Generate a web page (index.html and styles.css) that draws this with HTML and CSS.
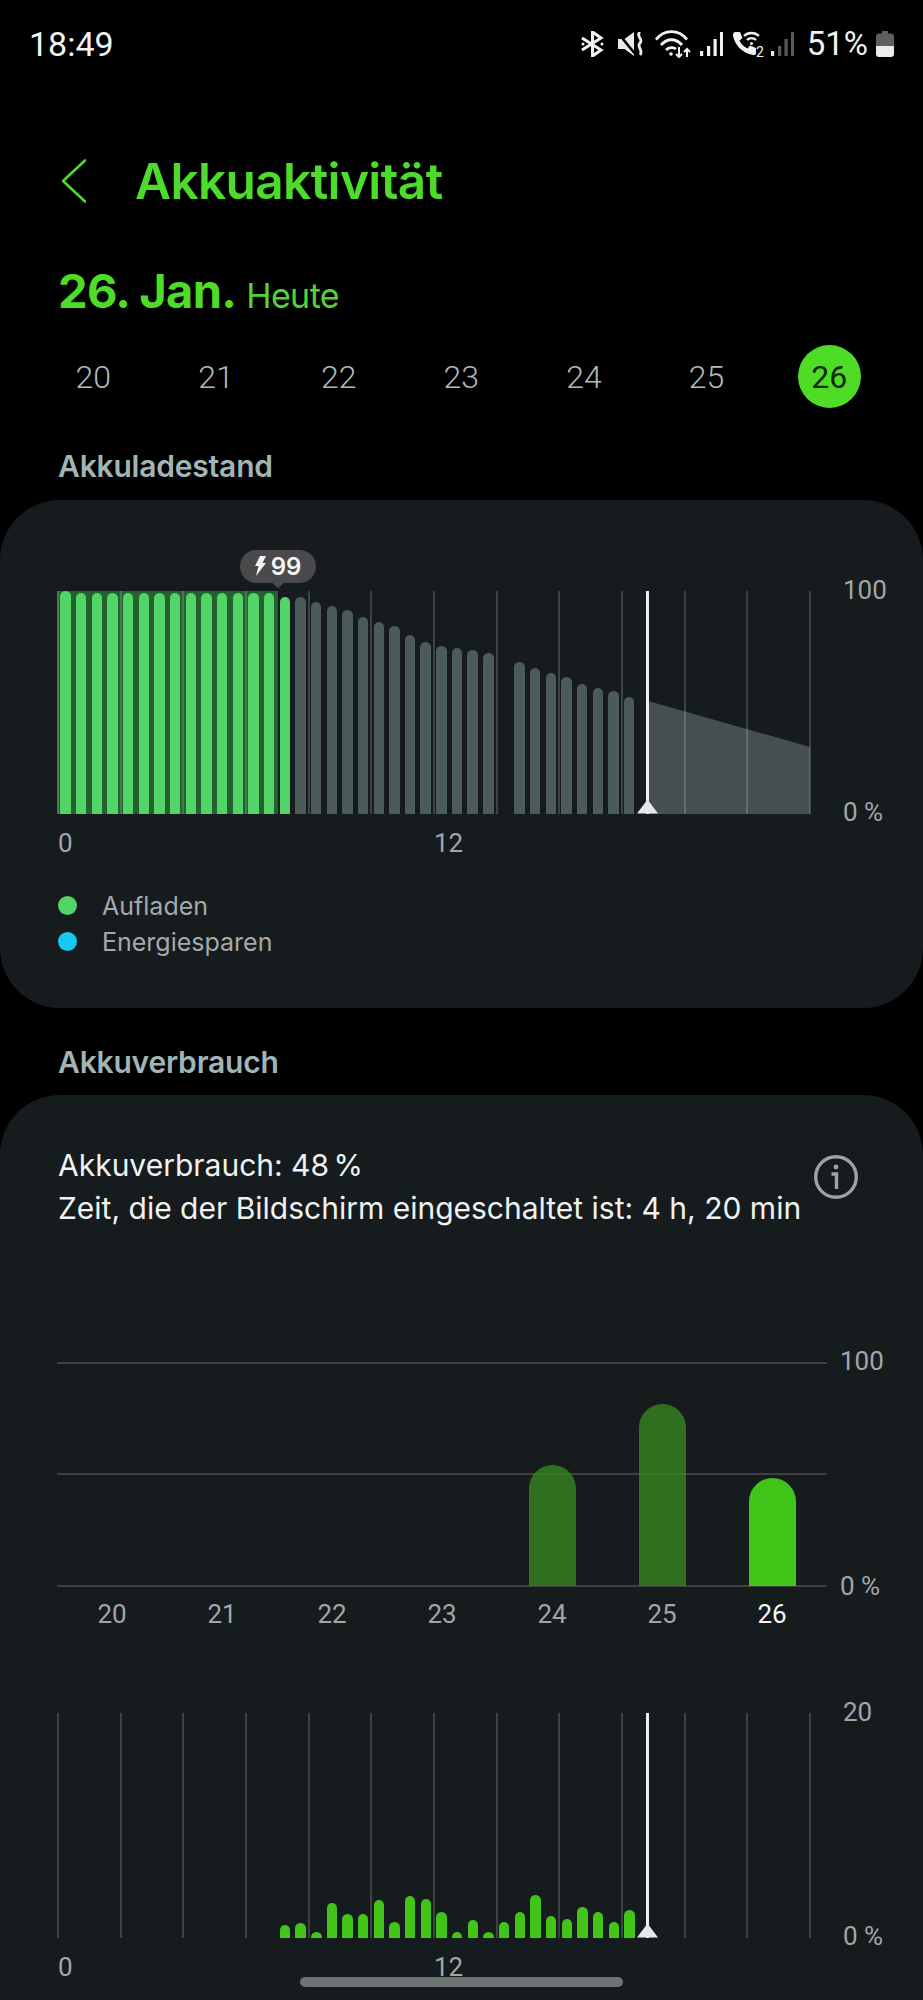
FILE: index.html
```html
<!DOCTYPE html>
<html lang="de">
<head>
<meta charset="utf-8">
<title>Akkuaktivität</title>
<link rel="stylesheet" href="styles.css">
</head>
<body>
<div class="page">
  <div class="status">
    <span class="clock">18:49</span>
    <div class="status-icons">
      <svg class="ic-bt" width="23" height="26" viewBox="0 0 23 26" fill="none" stroke="#f2f2f2" stroke-width="3"><path d="M1 7 20 19 11.500 25V1L20 7 1 19"/><circle cx="2" cy="13" r="1.500" fill="#f2f2f2" stroke="none"/><circle cx="21" cy="13" r="1.500" fill="#f2f2f2" stroke="none"/></svg>
      <svg class="ic-mute" width="26" height="24" viewBox="0 0 26 24" fill="none"><path d="M0 7H6.500L16 0V24L6.500 17H0z" fill="#ececec"/><path d="M0 1 18 23" stroke="#000" stroke-width="2.600"/><path d="M22 0c-5 4 4 7 0 11-4 4 4 7 0 12" stroke="#ececec" stroke-width="2.800"/></svg>
      <svg class="ic-wifi" width="37" height="28" viewBox="0 0 37 28" fill="none" stroke="#f2f2f2" stroke-width="2.800"><path d="M1 9.500C9.500 -1 23.500 -1 32 9.500"/><path d="M6 15C12 8 21 8 27 15"/><path d="M11 20C14 17 18.500 17 21 19"/><circle cx="16" cy="24" r="1.800" fill="#f2f2f2" stroke="none"/><path stroke-width="2" d="M24 17V27M21 24l3 3 3-3M32 27V19M29 22l3-3 3 3"/></svg>
      <svg class="ic-sig" width="23" height="24" viewBox="0 0 23 24" fill="#f2f2f2"><rect x="0" y="19" width="3.200" height="5"/><rect x="7" y="14" width="3.200" height="10"/><rect x="13.500" y="7" width="3.200" height="17"/><rect x="20" y="0" width="3" height="24"/></svg>
      <svg class="ic-call" width="34" height="30" viewBox="0 0 34 30" fill="none"><path d="M3 1 8 1 10.500 7 7.500 9.500C9 13 12 16 15.500 17.500L18 14.500 24 17V22C24 23.500 22.500 24.500 21 24 10 22 3 14 1 5 .8 3 1.500 1.500 3 1Z" fill="#f2f2f2"/><path d="M12 5C16 1 23 1 27 5M15 9C17.500 6.500 21.500 6.500 24 9" stroke="#f2f2f2" stroke-width="2.400"/><circle cx="19.500" cy="12.500" r="1.500" fill="#f2f2f2"/><text class="ic-call-2" x="24" y="26">2</text></svg>
      <svg class="ic-sig2" width="23" height="24" viewBox="0 0 23 24" fill="#5a5a5a"><rect x="0" y="19" width="3.200" height="5" fill="#e8e8e8"/><rect x="7" y="14" width="3.200" height="10"/><rect x="13.500" y="7" width="3.200" height="17"/><rect x="20" y="0" width="3" height="24"/></svg>
      <span class="pct">51%</span>
      <svg class="ic-bat" width="18" height="26" viewBox="0 0 18 26"><path d="M6 0H12V2.500H15C16.800 2.500 18 3.700 18 5.500V15H0V5.500C0 3.700 1.200 2.500 3 2.500H6z" fill="#5f5f5f"/><path d="M0 15H18V23C18 24.800 16.800 26 15 26H3C1.200 26 0 24.800 0 23z" fill="#ececec"/></svg>
    </div>
  </div>

  <header class="appbar">
    <svg class="back" width="24" height="44" viewBox="0 0 24 44" fill="none" stroke="#4ddb2b" stroke-width="2.600" stroke-linecap="round" stroke-linejoin="round"><path d="M23 1.500 1 22 23 42.500"/></svg>
    <h1 class="title">Akkuaktivität</h1>
  </header>

  <div class="date"><span class="date-main">26. Jan.</span><span class="date-sub">Heute</span></div>

  <div class="days">
    <span class="day">20</span><span class="day">21</span><span class="day">22</span><span class="day">23</span><span class="day">24</span><span class="day">25</span><span class="day day-on"><b>26</b></span>
  </div>

  <h2 class="section first">Akkuladestand</h2>
  <section class="card card-level">
    <div class="chart">
      <div class="plot">
        <svg class="forecast" viewBox="0 0 754 223" width="754" height="223"><path d="M591 110 753 156V223H591z" fill="#44504f"/></svg>
        <div class="band"></div>
        <div class="vgrid"><i></i><i></i><i></i><i></i><i></i><i></i><i></i><i></i><i></i><i></i><i></i><i></i><i></i></div>
        <div class="bars">
          <i class="g" style="height:223px"></i><i class="g" style="height:221px"></i><i class="g" style="height:221px"></i><i class="g" style="height:221px"></i><i class="g" style="height:221px"></i><i class="g" style="height:221px"></i><i class="g" style="height:221px"></i><i class="g" style="height:221px"></i><i class="g" style="height:221px"></i><i class="g" style="height:221px"></i><i class="g" style="height:221px"></i><i class="g" style="height:221px"></i><i class="g" style="height:221px"></i><i class="g" style="height:221px"></i><i class="g" style="height:216.700px"></i>
          <i class="s" style="height:216.700px"></i><i class="s" style="height:212px"></i><i class="s" style="height:207.700px"></i><i class="s" style="height:203.300px"></i><i class="s" style="height:196.700px"></i><i class="s" style="height:192px"></i><i class="s" style="height:187.700px"></i><i class="s" style="height:178.700px"></i><i class="s" style="height:172px"></i><i class="s" style="height:167.700px"></i><i class="s" style="height:165.300px"></i><i class="s" style="height:163.300px"></i><i class="s" style="height:161px"></i><i class="s" style="height:0"></i><i class="s" style="height:152px"></i><i class="s" style="height:145.300px"></i><i class="s" style="height:141px"></i><i class="s" style="height:136.300px"></i><i class="s" style="height:129.700px"></i><i class="s" style="height:125.300px"></i><i class="s" style="height:123px"></i><i class="s" style="height:116.300px"></i>
        </div>
        <div class="marker"></div>
        <div class="tip">
          <svg width="11" height="20" viewBox="0 0 11 20"><path d="M5 0H11L7.500 7H11L1 20 3.500 10H0z" fill="#f4f4f4"/></svg>
          <span>99</span>
        </div>
      </div>
      <div class="yaxis yaxis-a"><span>100</span><span>0 %</span></div>
    </div>
    <div class="xaxis"><span>0</span><span>12</span></div>
    <ul class="legend">
      <li><i class="dot dot-g"></i>Aufladen</li>
      <li><i class="dot dot-b"></i>Energiesparen</li>
    </ul>
  </section>

  <h2 class="section second">Akkuverbrauch</h2>
  <section class="card card-use">
    <div class="summary">
      <p>Akkuverbrauch: <span class="tight">48 %</span><br>Zeit, die der Bildschirm eingeschaltet ist: 4 h, 20 min</p>
      <svg class="info" width="44" height="44" viewBox="0 0 44 44" fill="none" stroke="#a0a2a3" stroke-width="3.400"><circle cx="22" cy="22" r="20.300"/><circle cx="22" cy="12" r="2.400" fill="#a0a2a3" stroke="none"/><path d="M17.500 19H22.500V34"/></svg>
    </div>

    <div class="week">
      <div class="week-plot">
        <div class="hgrid"><i></i><i></i><i></i></div>
        <div class="week-bars">
          <span></span><span></span><span></span><span></span>
          <span><i class="dim" style="height:121px"></i></span>
          <span><i class="dim" style="height:182px"></i></span>
          <span><i class="now" style="height:108px"></i></span>
        </div>
      </div>
      <div class="yaxis yaxis-b"><span>100</span><span>0 %</span></div>
    </div>
    <div class="week-days"><span>20</span><span>21</span><span>22</span><span>23</span><span>24</span><span>25</span><span class="today">26</span></div>

    <div class="chart chart-hours">
      <div class="plot">
        <div class="vgrid"><i></i><i></i><i></i><i></i><i></i><i></i><i></i><i></i><i></i><i></i><i></i><i></i><i></i></div>
        <div class="bars bars-late">
          <i class="u" style="height:12.700px"></i><i class="u" style="height:15px"></i><i class="u" style="height:6px"></i><i class="u" style="height:35px"></i><i class="u" style="height:23.700px"></i><i class="u" style="height:23.700px"></i><i class="u" style="height:37.300px"></i><i class="u" style="height:16px"></i><i class="u" style="height:41.700px"></i><i class="u" style="height:38.300px"></i><i class="u" style="height:26px"></i><i class="u" style="height:6px"></i><i class="u" style="height:18px"></i><i class="u" style="height:6px"></i><i class="u" style="height:16px"></i><i class="u" style="height:26px"></i><i class="u" style="height:43px"></i><i class="u" style="height:21.700px"></i><i class="u" style="height:18.300px"></i><i class="u" style="height:30.700px"></i><i class="u" style="height:26px"></i><i class="u" style="height:16px"></i><i class="u" style="height:27.300px"></i>
        </div>
        <div class="marker"></div>
      </div>
      <div class="yaxis yaxis-a"><span>20</span><span>0 %</span></div>
    </div>
    <div class="xaxis"><span>0</span><span>12</span></div>
  </section>

  <div class="home"></div>
</div>
</body>
</html>
```
FILE: styles.css
```css
* { box-sizing: border-box; }
html, body { margin: 0; background: #000; }
.page {
  position: relative;
  width: 923px;
  height: 2000px;
  overflow: hidden;
  background: #000;
  font-family: Roboto, "Liberation Sans", sans-serif;
}

/* status bar */
.status {
  display: flex;
  align-items: center;
  justify-content: space-between;
  height: 88px;
  padding: 0 29px 0 29px;
  color: #f2f2f2;
}
.clock { font-size: 34px; line-height: 88px; }
.status-icons { display: flex; align-items: center; }
.ic-bt { margin-right: 14px; }
.ic-mute { margin-right: 11px; }
.ic-wifi { margin-right: 8px; }
.ic-sig { margin-right: 9px; }
.ic-call { margin-top: 4px; margin-right: 5px; }
.ic-call-2 { font: 14px Roboto, sans-serif; fill: #f2f2f2; }
.ic-sig2 { margin-right: 13px; }
.pct { font-size: 33px; line-height: 40px; margin-right: 8px; }

/* app bar */
.appbar {
  display: flex;
  align-items: center;
  height: 70px;
  margin-top: 58px;
  padding-left: 62px;
}
.title {
  margin: -1px 0 0 49px;
  font: 600 49.500px/70px Inter, Roboto, sans-serif;
  letter-spacing: -0.6px;
  color: #4ddc2c;
}

/* date */
.date {
  display: flex;
  align-items: baseline;
  margin-top: 45px;
  padding-left: 58px;
  color: #4fdc28;
}
.date-main { font: 700 47px/60px Inter, Roboto, sans-serif; letter-spacing: -0.7px; }
.date-sub { font: 400 34px/60px Inter, Roboto, sans-serif; margin-left: 10px; letter-spacing: -0.6px; color: #52d436; }

.days {
  display: grid;
  grid-template-columns: repeat(7, 122.67px);
  align-items: center;
  height: 63px;
  margin-top: 19px;
  padding-left: 32px;
}
.day { text-align: center; font-size: 32px; font-weight: 300; color: #aebabb; }
.day-on {
  justify-self: center;
  display: flex;
  align-items: center;
  justify-content: center;
  width: 63px;
  height: 63px;
  border-radius: 50%;
  background: #4fdc24;
  color: #10280a;
}
.day-on b { font-weight: 400; }

.section {
  margin: 0;
  padding-left: 58px;
  font: 600 30px/36px Inter, Roboto, sans-serif;
  letter-spacing: -0.2px;
  color: #a1b5b6;
}
.section.first { margin-top: 40px; margin-bottom: 15.500px; }
.section.second { margin-top: 36px; margin-bottom: 15px; }

/* cards */
.card { background: #161c1e; border-radius: 60px; padding-left: 57px; }
.card-level { height: 508px; padding-top: 91px; }
.card-use { padding-top: 49px; padding-bottom: 80px; }

/* charts */
.chart { display: flex; }
.plot { position: relative; width: 754px; height: 223px; flex: none; }
.chart-hours .plot { height: 225px; }
.forecast, .band, .vgrid, .bars { position: absolute; left: 0; top: 0; }
.band { width: 221px; height: 100%; background: #25612f; }
.vgrid { width: 754px; height: 100%; display: flex; justify-content: space-between; }
.vgrid i { width: 2px; background: rgba(255, 255, 255, .17); }
.bars {
  display: flex;
  align-items: flex-end;
  gap: 5.27px;
  height: 100%;
  padding-left: 3.400px;
}
.bars i { width: 10.400px; flex: none; border-radius: 5.200px 5.200px 0 0; }
.bars .g { background: #52d469; }
.bars .s { background: #4b5a5b; }
.bars .u { background: #41c518; }
.bars-late { padding-left: 222.800px; }

.marker {
  position: absolute;
  left: 589px;
  top: 0;
  width: 3px;
  height: 100%;
  background: #f0f0f2;
}
.marker::after {
  content: "";
  position: absolute;
  left: -9px;
  bottom: 0;
  width: 21px;
  height: 14px;
  background: #e8e8ea;
  clip-path: polygon(50% 0, 100% 100%, 0 100%);
}

.tip {
  position: absolute;
  left: 183px;
  top: -41px;
  display: flex;
  align-items: center;
  justify-content: center;
  gap: 5px;
  width: 76px;
  height: 33px;
  border-radius: 17px;
  background: #4a4a4c;
  color: #f6f6f6;
  font: 600 24px/33px Inter, Roboto, sans-serif;
}
.tip::after {
  content: "";
  position: absolute;
  left: 32px;
  top: 33px;
  width: 12px;
  height: 6px;
  background: #4a4a4c;
  clip-path: polygon(0 0, 100% 0, 50% 100%);
}

.yaxis {
  display: flex;
  flex-direction: column;
  justify-content: space-between;
  font-size: 26px;
  font-weight: 400;
  line-height: 28px;
  color: #a2a6a7;
}
.yaxis-a { margin: -15px 0 -12px 32px; }
.yaxis-b { margin: -15px 0 -13px 13px; }

.xaxis {
  display: grid;
  grid-template-columns: 376px auto;
  margin-top: 14px;
  padding-left: 1px;
  font-size: 26px;
  font-weight: 400;
  line-height: 30px;
  color: #a2a6a7;
}

.legend { list-style: none; margin: 30px 0 0; padding: 0; font: 400 25px/36px Inter, Roboto, sans-serif; color: #a5a9aa; }
.legend li { display: flex; align-items: center; }
.dot { width: 19px; height: 19px; margin-left: 1px; margin-right: 25px; border-radius: 50%; }
.dot-g { background: #52d469; }
.dot-b { background: #19c8ee; }

.summary { display: flex; justify-content: space-between; align-items: flex-start; padding-right: 65px; }
.summary p { margin: 0; padding-left: 1px; white-space: nowrap; font: 400 30px/43.500px Inter, Roboto, sans-serif; color: #f0f1f1; }
.tight { word-spacing: -4px; }
.info { margin-top: 11px; flex: none; }

.week { display: flex; margin-top: 131px; }
.week-plot { position: relative; width: 770px; height: 225px; flex: none; }
.hgrid {
  display: flex;
  flex-direction: column;
  justify-content: space-between;
  height: 100%;
}
.hgrid i { height: 2px; background: #3d4143; }
.week-bars {
  position: absolute;
  inset: 0;
  display: grid;
  grid-template-columns: repeat(7, 110px);
  align-items: end;
  padding-bottom: 1px;
}
.week-bars span { display: flex; justify-content: center; align-items: flex-end; height: 100%; }
.week-bars i { display: block; width: 47px; border-radius: 23.500px 23.500px 0 0; }
.week-bars .dim { background: rgba(55, 140, 32, .75); }
.week-bars .now { background: #41c518; }
.week-days {
  display: grid;
  grid-template-columns: repeat(7, 110px);
  margin-top: 12px;
  text-align: center;
  font-size: 26px;
  font-weight: 400;
  line-height: 30px;
  color: #a2a6a7;
}
.week-days .today { color: #f6f6f6; }
.chart-hours { margin-top: 84px; }

.home {
  position: absolute;
  left: 300px;
  top: 1977px;
  width: 323px;
  height: 10px;
  border-radius: 5px;
  background: #6e7474;
}
```
